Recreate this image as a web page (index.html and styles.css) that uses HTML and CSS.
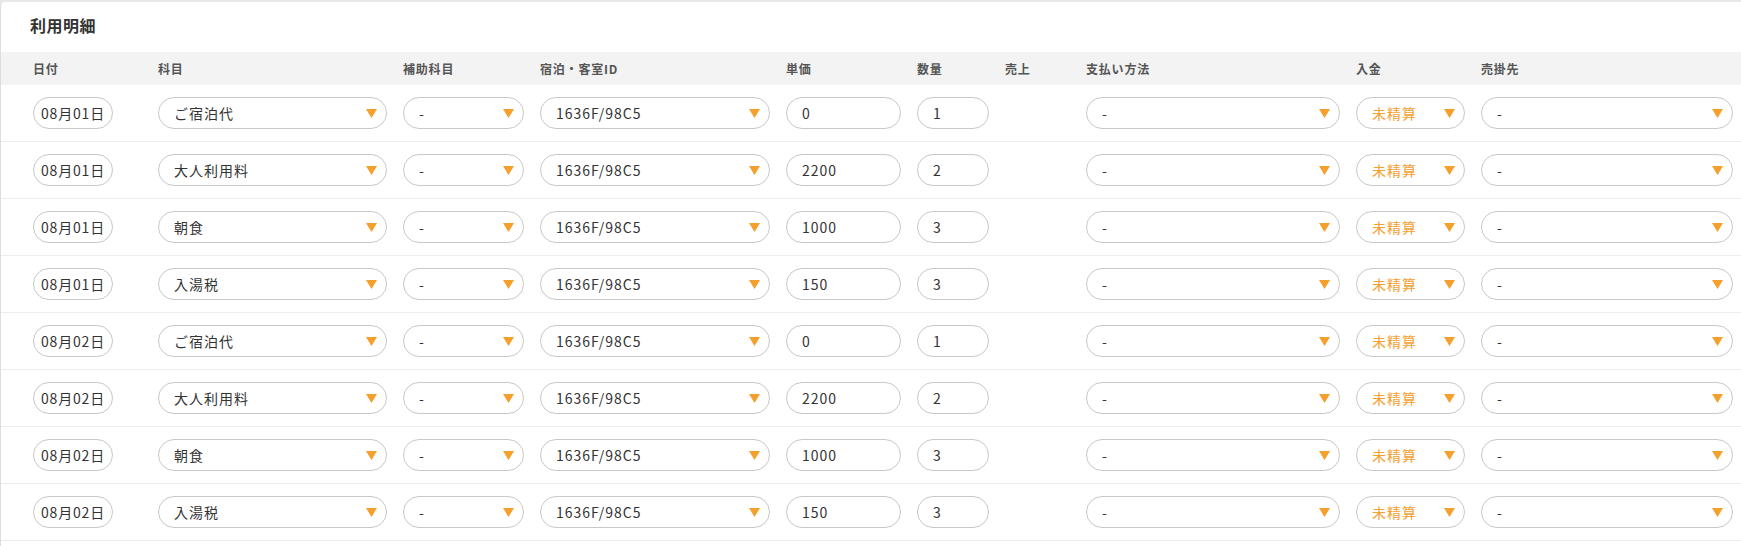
FILE: index.html
```html
<!DOCTYPE html>
<html lang="ja">
<head>
<meta charset="utf-8">
<title>利用明細</title>
<link rel="stylesheet" href="styles.css">
</head>
<body>
<div class="card">
  <h2 class="title">利用明細</h2>
  <div class="grid head">
    <div>日付</div><div>科目</div><div>補助科目</div><div>宿泊・客室ID</div><div>単価</div><div>数量</div><div>売上</div><div>支払い方法</div><div>入金</div><div>売掛先</div>
  </div>
  <div id="rows"></div>
</div>
<template id="row-tpl">
  <div class="grid row">
    <div><span class="pill date"></span></div>
    <div><span class="pill sel"><span class="v item"></span><svg class="arr" viewBox="0 0 10 8"><polygon points="0,0 10,0 5,8"/></svg></span></div>
    <div><span class="pill sel"><span class="v">-</span><svg class="arr" viewBox="0 0 10 8"><polygon points="0,0 10,0 5,8"/></svg></span></div>
    <div><span class="pill sel"><span class="v sp">1636F/98C5</span><svg class="arr" viewBox="0 0 10 8"><polygon points="0,0 10,0 5,8"/></svg></span></div>
    <div><span class="pill inp price"></span></div>
    <div><span class="pill inp qty"></span></div>
    <div></div>
    <div><span class="pill sel"><span class="v">-</span><svg class="arr" viewBox="0 0 10 8"><polygon points="0,0 10,0 5,8"/></svg></span></div>
    <div><span class="pill sel"><span class="v orange">未精算</span><svg class="arr" viewBox="0 0 10 8"><polygon points="0,0 10,0 5,8"/></svg></span></div>
    <div><span class="pill sel"><span class="v">-</span><svg class="arr" viewBox="0 0 10 8"><polygon points="0,0 10,0 5,8"/></svg></span></div>
  </div>
</template>
<script src="app.js"></script>
</body>
</html>
```

FILE: app.js
```js
const data = [
  ["08月01日", "ご宿泊代", "0", "1"],
  ["08月01日", "大人利用料", "2200", "2"],
  ["08月01日", "朝食", "1000", "3"],
  ["08月01日", "入湯税", "150", "3"],
  ["08月02日", "ご宿泊代", "0", "1"],
  ["08月02日", "大人利用料", "2200", "2"],
  ["08月02日", "朝食", "1000", "3"],
  ["08月02日", "入湯税", "150", "3"]
];
const tpl = document.getElementById("row-tpl");
const rows = document.getElementById("rows");
data.forEach(([d, item, price, qty]) => {
  const n = tpl.content.cloneNode(true);
  n.querySelector(".date").textContent = d;
  n.querySelector(".item").textContent = item;
  n.querySelector(".price").textContent = price;
  n.querySelector(".qty").textContent = qty;
  rows.appendChild(n);
});
```

FILE: styles.css
```css
html, body {
  margin: 0;
  padding: 0;
}
body {
  background: #e8e8e8;
  font-family: "Noto Sans CJK JP", "Noto Sans", sans-serif;
  color: #333;
  overflow: hidden;
  height: 546px;
}
.card {
  margin-top: 2px;
  background: #fff;
  border-left: 1px solid #dedede;
  border-top-left-radius: 4px;
  height: 544px;
  overflow: hidden;
}
.title {
  margin: 0;
  height: 50px;
  padding-left: 29px;
  font-size: 16px;
  font-weight: 700;
  line-height: 46px;
  letter-spacing: 0.5px;
  color: #333;
}
.grid {
  display: grid;
  grid-template-columns: 109px 229px 121px 230px 115px 72px 65px 254px 109px 252px;
  column-gap: 16px;
  padding-left: 32px;
}
.head {
  background: #f3f3f3;
  height: 33px;
  align-items: center;
  font-size: 12px;
  font-weight: 700;
  color: #555;
  letter-spacing: 0.8px;
}
.row {
  height: 56px;
  align-items: center;
  border-bottom: 1px solid #ededed;
}
.pill {
  box-sizing: border-box;
  height: 32px;
  border: 1px solid #c8c8c8;
  border-radius: 16px;
  display: flex;
  align-items: center;
  font-size: 14px;
  letter-spacing: 1px;
  color: #333;
  background: #fff;
}
.date {
  width: 80px;
  justify-content: center;
  letter-spacing: 0.8px;
}
.sel {
  justify-content: space-between;
  padding: 0 9px 0 15px;
}
.inp {
  padding-left: 15px;
}
.orange {
  color: #f5a02f;
}
.arr {
  width: 11px;
  height: 9px;
  fill: #f59f2c;
}
```
